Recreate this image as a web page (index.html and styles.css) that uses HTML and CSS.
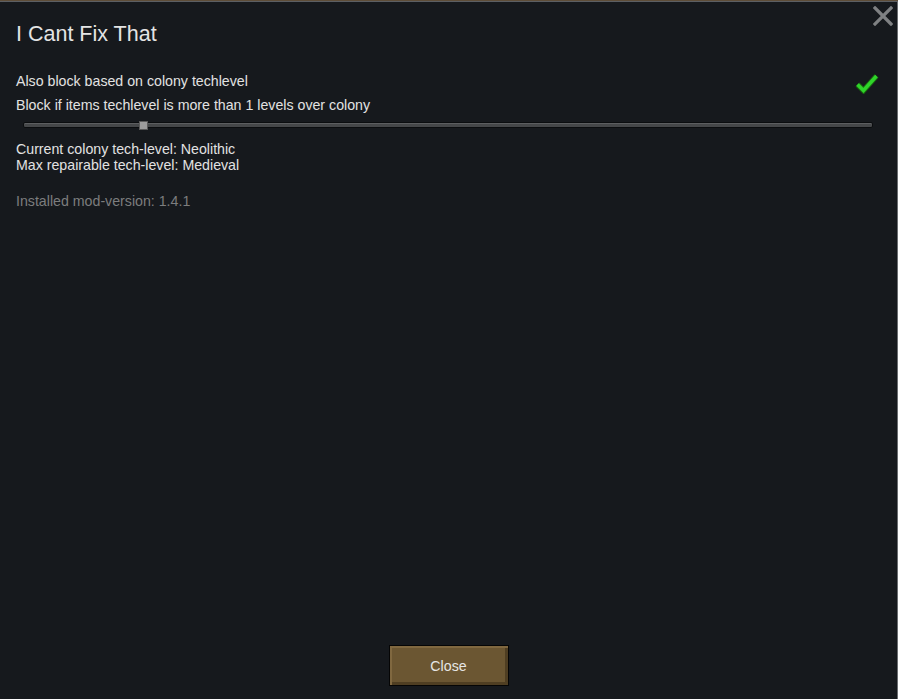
FILE: index.html
```html
<!DOCTYPE html>
<html>
<head>
<meta charset="utf-8">
<link rel="stylesheet" href="styles.css">
</head>
<body>
<div class="backdrop"></div>
<div class="window">
  <button class="close-x" aria-label="close">
    <svg width="20" height="20" viewBox="0 0 20 20"><path d="M2 2 L18 18 M18 2 L2 18" stroke="#7f8183" stroke-width="3.2" stroke-linecap="square"/></svg>
  </button>
  <h1 class="title">I Cant Fix That</h1>
  <div class="row check-row">
    <span>Also block based on colony techlevel</span>
    <svg class="check" width="24" height="22" viewBox="0 0 24 22"><path d="M2.5 12.5 L8.5 18.5 L21.5 4" fill="none" stroke="#1a6b10" stroke-width="5.5" stroke-linejoin="miter"/><path d="M2.5 12.5 L8.5 18.5 L21.5 4" fill="none" stroke="#2fd42a" stroke-width="3.5"/></svg>
  </div>
  <div class="row">Block if items techlevel is more than 1 levels over colony</div>
  <div class="slider">
    <div class="track"></div>
    <div class="handle" style="left: 116px"></div>
  </div>
  <div class="info">
    <div>Current colony tech-level: Neolithic</div>
    <div>Max repairable tech-level: Medieval</div>
  </div>
  <div class="version">Installed mod-version: 1.4.1</div>
  <div class="spacer"></div>
  <div class="footer">
    <button class="close-btn">Close</button>
  </div>
</div>
</body>
</html>
```

FILE: styles.css
```css
html, body {
  margin: 0;
  padding: 0;
  height: 100%;
  background: #16191d;
  font-family: "Liberation Sans", Arial, sans-serif;
  overflow: hidden;
}
.backdrop {
  height: 1px;
  background: #5e4d38;
}
.window {
  position: relative;
  box-sizing: border-box;
  height: 698px;
  border-top: 1px solid #5c5f63;
  border-right: 1px solid #6a6d70;
  background: #16191d;
  padding: 0 16px;
  display: flex;
  flex-direction: column;
  color: #e2e2e2;
}
.close-x {
  position: absolute;
  top: 3px;
  right: 3px;
  width: 22px;
  height: 22px;
  padding: 1px;
  border: none;
  background: none;
}
.title {
  margin: 0;
  padding-top: 19px;
  height: 26px;
  line-height: 26px;
  font-size: 21.5px;
  font-weight: normal;
  color: #e4e4e4;
}
.row {
  font-size: 14.2px;
  line-height: 16px;
  height: 16px;
  color: #e2e2e2;
}
.check-row {
  margin-top: 26px;
  display: flex;
  justify-content: space-between;
  align-items: center;
}
.check-row + .row {
  margin-top: 8px;
}
.check {
  margin-right: 2px;
  margin-top: 3px;
}
.slider {
  position: relative;
  height: 14px;
  margin: 5px 8px 0 7px;
}
.track {
  position: absolute;
  left: 0;
  right: 0;
  top: 4px;
  height: 6px;
  background: #454749;
  border: 1px solid #0b0d0f;
  border-radius: 2px;
  box-sizing: border-box;
  box-shadow: inset 0 1px 0 #5c5e60;
}
.handle {
  position: absolute;
  top: 3px;
  width: 9px;
  height: 9px;
  box-sizing: border-box;
  background: #9c9c9c;
  border: 1px solid #5a5a5a;
}
.info {
  margin-top: 9px;
  font-size: 14.2px;
  line-height: 16px;
  color: #e2e2e2;
}
.version {
  margin-top: 20px;
  font-size: 14.2px;
  line-height: 16px;
  color: #7c7d7e;
}
.spacer {
  flex: 1;
}
.footer {
  display: flex;
  justify-content: center;
  padding-bottom: 13px;
}
.close-btn {
  width: 120px;
  height: 41px;
  box-sizing: border-box;
  border: 1px solid #050505;
  background: #6b5632;
  box-shadow: inset 2px 2px 0 #806840, inset -3px -3px 0 #4f3e22;
  color: #e6e6e6;
  font-family: "Liberation Sans", Arial, sans-serif;
  font-size: 14.2px;
  padding: 0;
}
```
